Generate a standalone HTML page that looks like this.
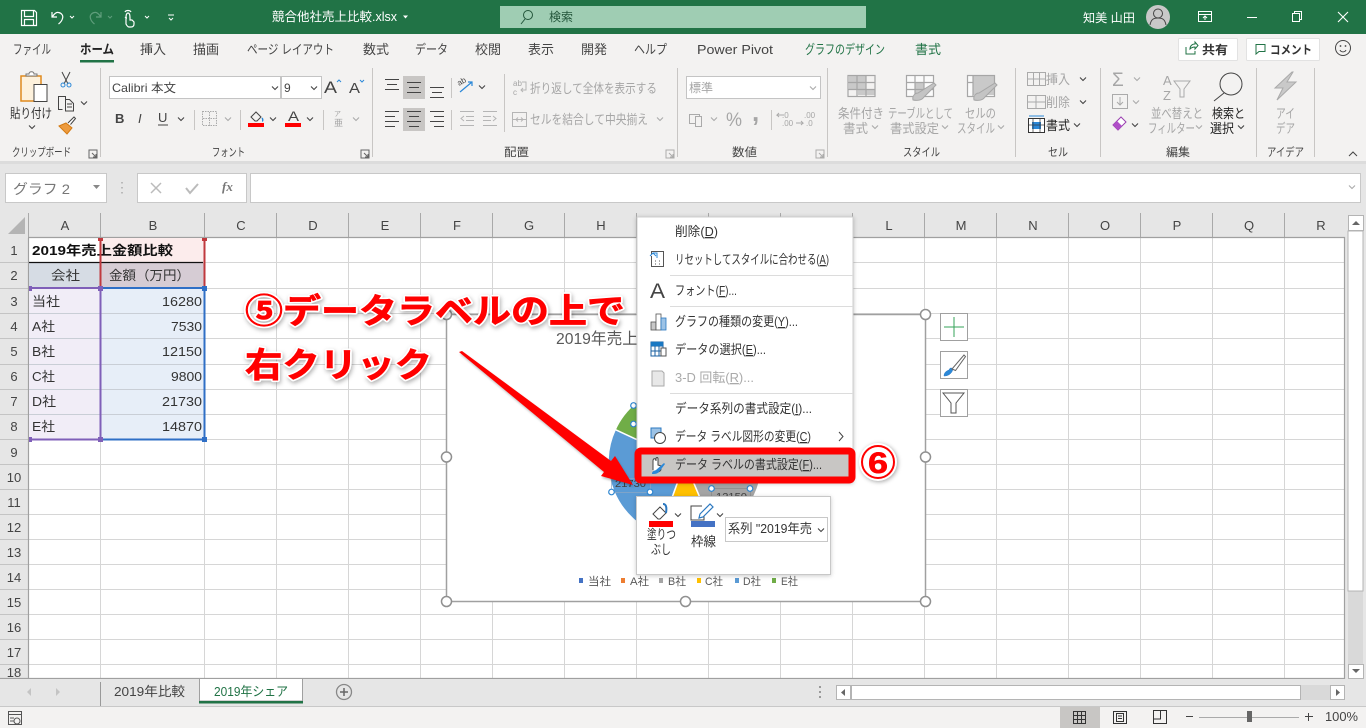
<!DOCTYPE html>
<html lang="ja"><head><meta charset="utf-8"><title>競合他社売上比較.xlsx</title>
<style>
html,body{margin:0;padding:0;background:#fff;width:1366px;height:728px;overflow:hidden}
svg{display:block}
text{font-family:"Liberation Sans","Noto Sans CJK JP",sans-serif;font-size:12px;fill:#444}
.w{fill:#fff}.g{fill:#a6a6a6}.d{fill:#444}.k{fill:#222}.gr{fill:#217346}
.t{font-size:13px}
.l{font-size:11.500px;fill:#444}
.h{font-size:13px;fill:#444;text-anchor:middle}
.c{font-size:13px;fill:#333}
.m{font-size:13px;fill:#333}
.big{font-size:34px;font-weight:bold;fill:#f00;stroke:#fff;stroke-width:4px;paint-order:stroke;stroke-linejoin:round;filter:drop-shadow(1px 2px 2px rgba(0,0,0,.3))}
.big2{font-size:34px;font-weight:bold;fill:#f00;stroke:#f00;stroke-width:.7px}
.u{text-decoration:underline}
</style></head><body>
<svg width="1366" height="728" viewBox="0 0 1366 728" xmlns="http://www.w3.org/2000/svg">
<defs>
<path id="ch" d="M-3-1.500 0 1.500 3-1.500" fill="none" stroke="#444" stroke-width="1.100"/>
<path id="cg" d="M-3-1.500 0 1.500 3-1.500" fill="none" stroke="#aaa" stroke-width="1.100"/>
<path id="lc" d="M0 0h8v8h-8zM3 3l4 4M7 4v3h-3" fill="none" stroke="#666" stroke-width="1"/>
</defs>
<rect width="1366" height="728" fill="#e6e6e6"/>

<!-- title bar -->
<rect width="1366" height="34" fill="#217346"/>
<g fill="none" stroke="#fff" stroke-width="1.200">
<path d="M21.500 10.500h13l2 2v13h-15zM24.500 10.500v6h9v-6M24.500 25.500v-6h9v6"/>
<path d="M52 12v5h5M52.500 16.500c2-3 4-4.500 6-4 3 .5 5 3 4 6-.5 2-2 4-4 5.500"/>
<path d="M70 16l2 2 2-2" stroke-width="1"/>
<path d="M101 12v5h-5M100.500 16.500c-2-3-4-4.500-6-4-3 .5-5 3-4 6 .5 2 2 4 4 5.500" stroke="#5f9e7c"/>
<path d="M108 16l2 2 2-2" stroke="#5f9e7c" stroke-width="1"/>
<path d="M126 24v-6c0-1 0-5 2-5s2 4 2 5v2h2l2 2v2c0 2-1 3-3 3h-2c-1 0-2-1-3-3zM125 12c1-2 5-2 6 0M125 17c1 1 2 1 2 1"/>
<path d="M145 16l2 2 2-2M168 15h6M169 18l2 2 2-2" stroke-width="1"/>
</g>
<text x="272" y="21" class="w" style="font-size:12.500px" textLength="125" lengthAdjust="spacingAndGlyphs">競合他社売上比較.xlsx</text>
<path d="M403 15.500h5l-2.500 3z" fill="#fff"/>
<rect x="500" y="6" width="366" height="22" fill="#9fcdb3"/>
<circle cx="528" cy="15" r="4.500" fill="none" stroke="#24563b" stroke-width="1"/><path d="M525 19l-4 5" stroke="#24563b" stroke-width="1"/>
<text x="549" y="21" style="fill:#24563b" textLength="24" lengthAdjust="spacingAndGlyphs">検索</text>
<text x="1083" y="22" class="w" textLength="52" lengthAdjust="spacingAndGlyphs">知美 山田</text>
<circle cx="1158" cy="17" r="12" fill="#c8c8c8"/>
<circle cx="1158" cy="13.500" r="4.500" fill="none" stroke="#444" stroke-width="1"/><path d="M1150 25c1-6 4-7 8-7s7 1 8 7" fill="none" stroke="#444" stroke-width="1"/>
<g fill="none" stroke="#fff" stroke-width="1">
<path d="M1198.500 11.500h13v10h-13zM1198.500 14.500h13M1205 20v-4M1203 18l2-2 2 2"/>
<path d="M1247 17.500h10"/>
<path d="M1292.500 13.500h7v8h-7zM1294.500 13.500v-2h7v8h-2"/>
<path d="M1338 12l10 10M1348 12l-10 10" stroke-width="1.100"/>
</g>

<!-- ribbon background -->
<rect y="34" width="1366" height="127" fill="#f3f2f1"/>
<rect y="161" width="1366" height="3" fill="#dcdcdc"/>
<!-- tabs -->
<text x="13" y="54" class="t" textLength="38" lengthAdjust="spacingAndGlyphs">ファイル</text>
<text x="80" y="54" font-weight="bold" class="k t" textLength="34" lengthAdjust="spacingAndGlyphs">ホーム</text>
<rect x="80" y="60" width="34" height="2.500" fill="#217346"/>
<text x="140" y="54" class="t" textLength="26" lengthAdjust="spacingAndGlyphs">挿入</text>
<text x="193" y="54" class="t" textLength="26" lengthAdjust="spacingAndGlyphs">描画</text>
<text x="247" y="54" class="t" textLength="87" lengthAdjust="spacingAndGlyphs">ページ レイアウト</text>
<text x="363" y="54" class="t" textLength="26" lengthAdjust="spacingAndGlyphs">数式</text>
<text x="415" y="54" class="t" textLength="33" lengthAdjust="spacingAndGlyphs">データ</text>
<text x="475" y="54" class="t" textLength="26" lengthAdjust="spacingAndGlyphs">校閲</text>
<text x="528" y="54" class="t" textLength="26" lengthAdjust="spacingAndGlyphs">表示</text>
<text x="581" y="54" class="t" textLength="26" lengthAdjust="spacingAndGlyphs">開発</text>
<text x="634" y="54" class="t" textLength="33" lengthAdjust="spacingAndGlyphs">ヘルプ</text>
<text x="697" y="54" class="t" textLength="76" lengthAdjust="spacingAndGlyphs">Power Pivot</text>
<text x="805" y="54" class="gr t" textLength="80" lengthAdjust="spacingAndGlyphs">グラフのデザイン</text>
<text x="915" y="54" class="gr t" textLength="26" lengthAdjust="spacingAndGlyphs">書式</text>
<rect x="1178.500" y="38.500" width="59" height="22" rx="1" fill="#fff" stroke="#e2e2e2"/>
<path d="M1186 47v7h9v-3M1190 49c0-3 2-5 5-5v-2l3 3.500-3 3.500v-2c-2 0-4 1-5 2z" fill="none" stroke="#217346" stroke-width="1"/>
<text x="1202" y="54" font-weight="bold" textLength="26" lengthAdjust="spacingAndGlyphs" style="fill:#333">共有</text>
<rect x="1246.500" y="38.500" width="73" height="22" rx="1" fill="#fff" stroke="#e2e2e2"/>
<path d="M1256 44.500h9v7h-6l-3 2.500z" fill="none" stroke="#217346" stroke-width="1"/>
<text x="1270" y="54" font-weight="bold" textLength="42" lengthAdjust="spacingAndGlyphs" style="fill:#333">コメント</text>
<circle cx="1343" cy="48" r="7.500" fill="none" stroke="#444" stroke-width="1"/><path d="M1340 50c1 2.500 5 2.500 6 0" fill="none" stroke="#444"/><circle cx="1340.500" cy="46" r=".9" fill="#444"/><circle cx="1345.500" cy="46" r=".9" fill="#444"/>

<!-- ribbon separators -->
<g stroke="#c8c6c4" stroke-width="1">
<path d="M100.500 68v89M372.500 68v89M677.500 68v89M827.500 68v89M1015.500 68v89M1100.500 68v89M1256.500 68v89M1314.500 68v89"/>
<path d="M194.500 110v20M240.500 110v20M323.500 110v20M451.500 78v20M451.500 110v20M504.500 74v58M771.500 110v20"/>
</g>

<!-- clipboard -->
<rect x="21" y="76" width="20" height="25" fill="#fdf1dc" stroke="#e08a1e" stroke-width="1.500"/>
<path d="M26 76v-2h3c0-3 5-3 5 0h3v2z" fill="#fff" stroke="#777"/>
<rect x="34" y="84.500" width="13" height="17" fill="#fff" stroke="#444"/>
<text x="10" y="118" class="m" textLength="42" lengthAdjust="spacingAndGlyphs">貼り付け</text>
<use href="#ch" x="32" y="127"/>
<path d="M62 72l6 12M70 72l-6 12" stroke="#444" fill="none"/><circle cx="63" cy="85" r="2" fill="none" stroke="#2b88d8"/><circle cx="69" cy="85" r="2" fill="none" stroke="#2b88d8"/>
<path d="M62.500 109.500h-4v-13h7v3M65.500 99.500h4l4 4v7.500h-8zM67 104h5M67 107h5" fill="none" stroke="#444"/>
<use href="#ch" x="84" y="103"/>
<path d="M59 126l7-3 6 5-5 6z" fill="#ed9b3e" stroke="#d47a12"/><path d="M68 123l6-6 1.500 1.500-5 6" fill="#fff" stroke="#444"/>
<text x="12" y="156" class="l" textLength="59" lengthAdjust="spacingAndGlyphs">クリップボード</text>
<use href="#lc" x="89" y="150"/>

<!-- font -->
<rect x="109.500" y="76.500" width="171" height="22" fill="#fff" stroke="#c4c4c4"/>
<rect x="281.500" y="76.500" width="40" height="22" fill="#fff" stroke="#c4c4c4"/>
<text x="112" y="92" textLength="64" lengthAdjust="spacingAndGlyphs">Calibri 本文</text>
<use href="#ch" x="275" y="88"/>
<text x="284" y="92">9</text>
<use href="#ch" x="314" y="88"/>
<text x="324" y="93" style="font-size:17px" textLength="13" lengthAdjust="spacingAndGlyphs">A</text>
<path d="M337 82l2-2 2 2" fill="none" stroke="#2b88d8"/>
<text x="349" y="93" style="font-size:15px" textLength="11" lengthAdjust="spacingAndGlyphs">A</text>
<path d="M360 80l2 2 2-2" fill="none" stroke="#2b88d8"/>
<text x="115" y="123" font-weight="bold" style="font-size:13px">B</text>
<text x="138" y="123" font-style="italic" style="font-size:13px">I</text>
<text x="158" y="122" style="font-size:13px">U</text><path d="M158 125h10" stroke="#444"/>
<use href="#ch" x="181" y="119"/>
<rect x="202.500" y="111.500" width="14" height="14" fill="none" stroke="#aaa" stroke-dasharray="1.500 1"/><path d="M209.500 112v14M203 118.500h14" stroke="#aaa" stroke-dasharray="1.500 1"/>
<use href="#cg" x="228" y="119"/>
<path d="M251 117l5-5 5 5-4 4h-2z" fill="none" stroke="#444"/><path d="M262 118c1 1 1 3 0 3" stroke="#2b88d8" stroke-width="1.500" fill="none"/>
<rect x="248" y="123" width="16" height="4" fill="#f00"/>
<use href="#ch" x="273" y="119"/>
<text x="288" y="121" style="font-size:14px" textLength="11" lengthAdjust="spacingAndGlyphs">A</text>
<rect x="285" y="123" width="16" height="4" fill="#f00"/>
<use href="#ch" x="310" y="119"/>
<text x="334" y="116" class="g" style="font-size:7px">ア</text><text x="334" y="126" class="g" style="font-size:9px">亜</text>
<use href="#cg" x="356" y="119"/>
<text x="212" y="156" class="l" textLength="33" lengthAdjust="spacingAndGlyphs">フォント</text>
<use href="#lc" x="361" y="150"/>

<!-- alignment -->
<rect x="403" y="76" width="22" height="23" fill="#c8c6c4"/>
<rect x="403" y="108" width="22" height="23" fill="#c8c6c4"/>
<g stroke="#444" stroke-width="1" fill="none">
<path d="M385 79.500h14M387 84.500h10M385 89.500h14"/>
<path d="M407 82.500h14M409 87.500h10M407 92.500h14"/>
<path d="M430 87.500h14M432 92.500h10M430 97.500h14"/>
<path d="M385 111.500h14M385 116.500h10M385 121.500h14M385 126.500h10"/>
<path d="M407 111.500h14M409 116.500h10M407 121.500h14M409 126.500h10"/>
<path d="M430 111.500h14M434 116.500h10M430 121.500h14M434 126.500h10"/>
</g>
<path d="M460 92l12-10M468 82h4v4" fill="none" stroke="#2b88d8" stroke-width="1.200"/>
<text x="459" y="86" style="font-size:8px" transform="rotate(-30 459 86)">ab</text>
<use href="#ch" x="482" y="87"/>
<g stroke="#b5b5b5" fill="none">
<path d="M460 111.500h14M466 116.500h8M466 120.500h8M460 125.500h14M464 116l-3 2.500 3 2.500"/>
<path d="M483 111.500h14M483 116.500h8M483 120.500h8M483 125.500h14M493 116l3 2.500-3 2.500"/>
<rect x="512.500" y="112.500" width="14" height="14"/><path d="M512.500 119.500h14M516 119.500l2-2M516 119.500l2 2M523 119.500l-2-2M523 119.500l-2 2"/>
</g>
<text x="513" y="86" class="g" style="font-size:8px">ab</text><text x="513" y="95" class="g" style="font-size:8px">c</text>
<path d="M522 82h4v8h-5M523 88l-2 2 2 2" fill="none" stroke="#b5b5b5"/>
<text x="530" y="93" class="g" style="font-size:13px" textLength="127" lengthAdjust="spacingAndGlyphs">折り返して全体を表示する</text>
<text x="530" y="124" class="g" style="font-size:13px" textLength="118" lengthAdjust="spacingAndGlyphs">セルを結合して中央揃え</text>
<use href="#cg" x="660" y="119"/>
<text x="504" y="156" class="l" textLength="25" lengthAdjust="spacingAndGlyphs">配置</text>
<use href="#lc" x="666" y="150" opacity=".5"/>

<!-- number -->
<rect x="686.500" y="76.500" width="134" height="22" fill="#fff" stroke="#c4c4c4"/>
<text x="689" y="92" class="g" textLength="24" lengthAdjust="spacingAndGlyphs">標準</text>
<use href="#cg" x="813" y="88"/>
<rect x="689.500" y="114.500" width="10" height="9" fill="none" stroke="#aaa"/><rect x="695.500" y="116.500" width="6" height="10" fill="#f3f2f1" stroke="#aaa"/>
<use href="#cg" x="714" y="119"/>
<text x="726" y="126" class="g" style="font-size:19px" textLength="16" lengthAdjust="spacingAndGlyphs">%</text>
<text x="752" y="121" class="g" style="font-size:26px;font-weight:bold">,</text>
<text x="782" y="118" class="g" style="font-size:8px">.0</text><text x="782" y="126" class="g" style="font-size:8px">.00</text><path d="M784 115h-7l2-2M777 115l2 2" fill="none" stroke="#aaa"/>
<text x="804" y="118" class="g" style="font-size:8px">.00</text><text x="806" y="126" class="g" style="font-size:8px">.0</text><path d="M796 123h7l-2-2M803 123l-2 2" fill="none" stroke="#aaa"/>
<text x="732" y="156" class="l" textLength="25" lengthAdjust="spacingAndGlyphs">数値</text>
<use href="#lc" x="816" y="150" opacity=".5"/>

<!-- styles -->
<path d="M849 76h17v6h-8v7h-9zM858 82h8v7h9v6h-17z" fill="#c9c9c9"/>
<rect x="906.500" y="75.500" width="27" height="21" fill="#fbfbfb"/>
<rect x="915" y="82" width="9" height="14" fill="#c9c9c9"/>
<rect x="967.500" y="75.500" width="27" height="21" fill="#fbfbfb"/>
<rect x="973" y="76" width="21" height="19" fill="#c9c9c9"/>
<g fill="none" stroke="#a6a6a6" stroke-width="1.200">
<rect x="848" y="75.500" width="27" height="21"/><path d="M848 82.500h27M848 89.500h27M857 75v21M866 75v21"/>
<rect x="906.500" y="75.500" width="27" height="21"/><path d="M906 82.500h27M906 89.500h27M915 75v21M924 75v21"/>
<rect x="967.500" y="75.500" width="27" height="21"/><path d="M967 82.500h6M973 75v21"/>
</g>
<path d="M913 100c-1-4 2-7 5-7l16-10 2 2-12 12c-2 3-6 4-11 3zM974 100c-1-4 2-7 5-7l16-10 2 2-12 12c-2 3-6 4-11 3z" fill="#c4c4c4" stroke="#a6a6a6"/>
<text x="838" y="118" class="g" style="font-size:13px" textLength="46" lengthAdjust="spacingAndGlyphs">条件付き</text>
<text x="843" y="133" class="g" style="font-size:13px" textLength="25" lengthAdjust="spacingAndGlyphs">書式</text><use href="#cg" x="875" y="127"/>
<text x="888" y="118" class="g" style="font-size:13px" textLength="65" lengthAdjust="spacingAndGlyphs">テーブルとして</text>
<text x="890" y="133" class="g" style="font-size:13px" textLength="49" lengthAdjust="spacingAndGlyphs">書式設定</text><use href="#cg" x="945" y="127"/>
<text x="965" y="118" class="g" style="font-size:13px" textLength="31" lengthAdjust="spacingAndGlyphs">セルの</text>
<text x="957" y="133" class="g" style="font-size:13px" textLength="38" lengthAdjust="spacingAndGlyphs">スタイル</text><use href="#cg" x="1001" y="127"/>
<text x="903" y="156" class="l" textLength="37" lengthAdjust="spacingAndGlyphs">スタイル</text>

<!-- cells -->
<g fill="none" stroke="#aaa">
<rect x="1027.500" y="72.500" width="18" height="13"/><path d="M1033.500 72v14M1039.500 72v14M1027 79h18"/>
<rect x="1027.500" y="95.500" width="18" height="13"/><path d="M1027 102h18M1036 95v14"/>
</g>
<text x="1046" y="84" class="g" style="font-size:13px" textLength="24" lengthAdjust="spacingAndGlyphs">挿入</text>
<text x="1046" y="107" class="g" style="font-size:13px" textLength="24" lengthAdjust="spacingAndGlyphs">削除</text>
<rect x="1028.500" y="118.500" width="16" height="14" fill="#fff" stroke="#333"/><rect x="1032" y="122" width="9" height="7" fill="#2b88d8"/><path d="M1033 118v14M1040 118v14M1028 125h16" stroke="#333" fill="none" opacity=".7"/>
<path d="M1029 116h15" stroke="#2b88d8"/>
<text x="1046" y="130" class="k" style="font-size:13px" textLength="24" lengthAdjust="spacingAndGlyphs">書式</text>
<use href="#ch" x="1083" y="79"/><use href="#ch" x="1083" y="102"/><use href="#ch" x="1077" y="125"/>
<text x="1048" y="156" class="l" textLength="20" lengthAdjust="spacingAndGlyphs">セル</text>

<!-- editing -->
<text x="1112" y="86" class="g" style="font-size:19px">Σ</text><use href="#cg" x="1137" y="79"/>
<rect x="1112.500" y="94.500" width="15" height="14" fill="none" stroke="#aaa"/><path d="M1120 97v8M1117 102l3 3 3-3" fill="none" stroke="#aaa"/>
<use href="#cg" x="1136" y="102"/>
<path d="M1113 125l8-8 5 5-8 8z" fill="#fff" stroke="#9a3fb0"/><path d="M1113 125l4-4 5 5-4 4z" fill="#b04fc8"/>
<use href="#ch" x="1135" y="125"/>
<text x="1163" y="85" class="g" style="font-size:13px">A</text><text x="1163" y="100" class="g" style="font-size:13px">Z</text>
<path d="M1174 81h16l-6 8v8h-4v-8z" fill="none" stroke="#aaa"/>
<text x="1151" y="118" class="g" style="font-size:13px" textLength="52" lengthAdjust="spacingAndGlyphs">並べ替えと</text>
<text x="1148" y="133" class="g" style="font-size:13px" textLength="47" lengthAdjust="spacingAndGlyphs">フィルター</text><use href="#cg" x="1199" y="127"/>
<circle cx="1231" cy="84" r="11" fill="none" stroke="#444"/><path d="M1224 93l-10 8" stroke="#444" fill="none"/>
<text x="1212" y="118" class="k" style="font-size:13px" textLength="33" lengthAdjust="spacingAndGlyphs">検索と</text>
<text x="1210" y="133" class="k" style="font-size:13px" textLength="24" lengthAdjust="spacingAndGlyphs">選択</text><use href="#ch" x="1241" y="127"/>
<text x="1166" y="156" class="l" textLength="24" lengthAdjust="spacingAndGlyphs">編集</text>
<!-- ideas -->
<path d="M1292 72l-17 16h8l-6 12 19-18h-9l6-10z" fill="#c9c9c9" stroke="#aaa"/>
<text x="1276" y="118" class="g" style="font-size:13px" textLength="19" lengthAdjust="spacingAndGlyphs">アイ</text>
<text x="1276" y="133" class="g" style="font-size:13px" textLength="19" lengthAdjust="spacingAndGlyphs">デア</text>
<text x="1267" y="156" class="l" textLength="37" lengthAdjust="spacingAndGlyphs">アイデア</text>
<path d="M1349 156l4-4 4 4" fill="none" stroke="#444"/>

<!-- formula bar -->
<rect x="5.500" y="173.500" width="101" height="29" fill="#fff" stroke="#c8c8c8"/>
<text x="13" y="194" textLength="57" lengthAdjust="spacingAndGlyphs" style="font-size:14px;fill:#777">グラフ 2</text>
<path d="M93 185h7l-3.500 4z" fill="#888"/>
<path d="M122 182v1.500M122 187v1.500M122 192v1.500" stroke="#aaa" stroke-width="1.500"/>
<rect x="137.500" y="173.500" width="109" height="29" fill="#fff" stroke="#c8c8c8"/>
<path d="M151 183l10 10M161 183l-10 10" stroke="#bbb" stroke-width="1.500"/>
<path d="M186 188l4 5 8-9" stroke="#bbb" stroke-width="2" fill="none"/>
<text x="222" y="191" style="font-family:'Liberation Serif',serif;font-style:italic;font-weight:bold;font-size:13px;fill:#777">fx</text>
<rect x="250.500" y="173.500" width="1110" height="29" fill="#fff" stroke="#c8c8c8"/>
<use href="#cg" x="1352" y="187"/>

<!-- sheet -->
<rect x="29" y="238" width="1315" height="440" fill="#fff"/>
<path d="M8 234L25 217V234Z" fill="#b4b4b4"/>
<g stroke="#a9a9a9"><path d="M28.500 213v25M100.500 213v25M204.500 213v25M276.500 213v25M348.500 213v25M420.500 213v25M492.500 213v25M564.500 213v25M636.500 213v25M708.500 213v25M780.500 213v25M852.500 213v25M924.500 213v25M996.500 213v25M1068.500 213v25M1140.500 213v25M1212.500 213v25M1284.500 213v25"/></g>
<path d="M0 262.500h28M0 288.500h28M0 313.500h28M0 338.500h28M0 364.500h28M0 389.500h28M0 414.500h28M0 439.500h28M0 464.500h28M0 489.500h28M0 514.500h28M0 539.500h28M0 564.500h28M0 589.500h28M0 614.500h28M0 639.500h28M0 664.500h28" stroke="#c4c4c4"/>
<g stroke="#d6d6d6">
<path d="M29 262.500H1344M29 288.500H1344M29 313.500H1344M29 338.500H1344M29 364.500H1344M29 389.500H1344M29 414.500H1344M29 439.500H1344M29 464.500H1344M29 489.500H1344M29 514.500H1344M29 539.500H1344M29 564.500H1344M29 589.500H1344M29 614.500H1344M29 639.500H1344M29 664.500H1344"/>
<path d="M100.500 238v440M204.500 238v440M276.500 238v440M348.500 238v440M420.500 238v440M492.500 238v440M564.500 238v440M636.500 238v440M708.500 238v440M780.500 238v440M852.500 238v440M924.500 238v440M996.500 238v440M1068.500 238v440M1140.500 238v440M1212.500 238v440M1284.500 238v440"/>
</g>
<path d="M28.500 238v440M28 237.500H1344.500V678.500H0" fill="none" stroke="#a0a0a0" stroke-width="1.200"/>
<g>
<text x="65" y="230" class="h">A</text><text x="153" y="230" class="h">B</text><text x="241" y="230" class="h">C</text><text x="313" y="230" class="h">D</text><text x="385" y="230" class="h">E</text><text x="457" y="230" class="h">F</text><text x="529" y="230" class="h">G</text><text x="601" y="230" class="h">H</text><text x="889" y="230" class="h">L</text><text x="961" y="230" class="h">M</text><text x="1033" y="230" class="h">N</text><text x="1105" y="230" class="h">O</text><text x="1177" y="230" class="h">P</text><text x="1249" y="230" class="h">Q</text><text x="1321" y="230" class="h">R</text>
<text x="14" y="255" class="h">1</text><text x="14" y="280" class="h">2</text><text x="14" y="306" class="h">3</text><text x="14" y="331" class="h">4</text><text x="14" y="356" class="h">5</text><text x="14" y="381" class="h">6</text><text x="14" y="406" class="h">7</text><text x="14" y="431" class="h">8</text><text x="14" y="457" class="h">9</text><text x="14" y="482" class="h">10</text><text x="14" y="507" class="h">11</text><text x="14" y="532" class="h">12</text><text x="14" y="557" class="h">13</text><text x="14" y="582" class="h">14</text><text x="14" y="607" class="h">15</text><text x="14" y="632" class="h">16</text><text x="14" y="657" class="h">17</text><text x="14" y="677" class="h">18</text>
</g>
<!-- cell fills -->
<rect x="101" y="238" width="103" height="24" fill="#fcecec"/>
<rect x="29" y="263" width="71" height="25" fill="#d6dce4"/>
<rect x="101" y="263" width="103" height="25" fill="#d6ccd4"/>
<rect x="29" y="288" width="71" height="151" fill="#f1edf7"/>
<rect x="101" y="288" width="103" height="151" fill="#e7eef8"/>
<path d="M29 313.500h175M29 338.500h175M29 364.500h175M29 389.500h175M29 414.500h175" stroke="#c9ced6"/>
<path d="M29 262.500h174" stroke="#111" stroke-width="1.200"/>
<text x="32" y="255" font-weight="bold" style="font-size:13px;fill:#111" textLength="141" lengthAdjust="spacingAndGlyphs">2019年売上金額比較</text>
<text x="51" y="280" class="c" textLength="29" lengthAdjust="spacingAndGlyphs">会社</text>
<text x="109" y="280" class="c" textLength="81" lengthAdjust="spacingAndGlyphs">金額（万円）</text>
<text x="32" y="306" class="c" textLength="28" lengthAdjust="spacingAndGlyphs">当社</text>
<text x="32" y="331" class="c" textLength="23" lengthAdjust="spacingAndGlyphs">A社</text>
<text x="32" y="356" class="c" textLength="23" lengthAdjust="spacingAndGlyphs">B社</text>
<text x="32" y="381" class="c" textLength="23" lengthAdjust="spacingAndGlyphs">C社</text>
<text x="32" y="406" class="c" textLength="24" lengthAdjust="spacingAndGlyphs">D社</text>
<text x="32" y="431" class="c" textLength="23" lengthAdjust="spacingAndGlyphs">E社</text>
<g text-anchor="end">
<text x="202" y="306" class="c" textLength="40" lengthAdjust="spacingAndGlyphs">16280</text>
<text x="202" y="331" class="c" textLength="31" lengthAdjust="spacingAndGlyphs">7530</text>
<text x="202" y="356" class="c" textLength="40" lengthAdjust="spacingAndGlyphs">12150</text>
<text x="202" y="381" class="c" textLength="31" lengthAdjust="spacingAndGlyphs">9800</text>
<text x="202" y="406" class="c" textLength="40" lengthAdjust="spacingAndGlyphs">21730</text>
<text x="202" y="431" class="c" textLength="40" lengthAdjust="spacingAndGlyphs">14870</text>
</g>
<!-- range highlights -->
<path d="M100.500 238v50M204.500 238v50" stroke="#c0393e" stroke-width="2"/>
<rect x="98" y="238" width="5" height="3" fill="#c0393e"/><rect x="202" y="238" width="5" height="3" fill="#c0393e"/>
<path d="M29 288h72M29 439.500h72M100.500 288v151" stroke="#7f5fb8" stroke-width="2" fill="none"/>
<path d="M101 288h104M101 439.500h104M204.500 288v151" stroke="#2f6fc6" stroke-width="2" fill="none"/>
<rect x="29" y="286" width="3" height="5" fill="#7f5fb8"/><rect x="29" y="437" width="3" height="5" fill="#7f5fb8"/>
<rect x="98" y="286" width="5" height="5" fill="#7f5fb8"/><rect x="98" y="437" width="5" height="5" fill="#7f5fb8"/>
<rect x="202" y="286" width="5" height="5" fill="#2f6fc6"/><rect x="202" y="437" width="5" height="5" fill="#2f6fc6"/>

<!-- chart -->
<rect x="446.500" y="314.500" width="479" height="287" fill="#fff" stroke="#a0a0a0" stroke-width="1.500"/>
<text x="556" y="344" textLength="82" lengthAdjust="spacingAndGlyphs" style="font-size:16px;fill:#595959">2019年売上</text>
<g stroke="#fff" stroke-width="1.500">
<path d="M685 462L658.700 534.400A77 77 0 0 1 615.200 429.500Z" fill="#5b9bd5"/>
<path d="M685 462L615.200 429.500A77 77 0 0 1 685 385Z" fill="#70ad47"/>
<path d="M685 462L714.800 533A77 77 0 0 1 658.700 534.400Z" fill="#ffc000"/>
<path d="M685 462L759.700 480.800A77 77 0 0 1 714.800 533Z" fill="#a5a5a5"/>
</g>
<text x="615" y="487" style="font-size:10px;fill:#404040" textLength="31" lengthAdjust="spacingAndGlyphs">21730</text>
<text x="716" y="500" style="font-size:10px;fill:#404040" textLength="31" lengthAdjust="spacingAndGlyphs">12150</text>
<rect x="611.500" y="478.500" width="39" height="14" fill="none" stroke="#8fa9c4" stroke-width=".7"/>
<rect x="711.500" y="488.500" width="39" height="14" fill="none" stroke="#8a8a8a" stroke-width=".7"/>
<g fill="#fff" stroke="#2f86d0" stroke-width="1.200">
<circle cx="611.500" cy="492" r="2.800"/><circle cx="650" cy="492" r="2.800"/><circle cx="711.500" cy="488.500" r="2.800"/><circle cx="750" cy="488.500" r="2.800"/><circle cx="633.500" cy="405.500" r="2.800"/><circle cx="633.500" cy="424" r="2.800"/>
</g>
<g>
<rect x="579" y="578" width="4" height="5" fill="#4472c4"/><text x="588" y="585" style="font-size:11px;fill:#595959" textLength="23" lengthAdjust="spacingAndGlyphs">当社</text>
<rect x="621" y="578" width="4" height="5" fill="#ed7d31"/><text x="630" y="585" style="font-size:11px;fill:#595959" textLength="19" lengthAdjust="spacingAndGlyphs">A社</text>
<rect x="659" y="578" width="4" height="5" fill="#a5a5a5"/><text x="668" y="585" style="font-size:11px;fill:#595959" textLength="18" lengthAdjust="spacingAndGlyphs">B社</text>
<rect x="697" y="578" width="4" height="5" fill="#ffc000"/><text x="705" y="585" style="font-size:11px;fill:#595959" textLength="18" lengthAdjust="spacingAndGlyphs">C社</text>
<rect x="735" y="578" width="4" height="5" fill="#5b9bd5"/><text x="743" y="585" style="font-size:11px;fill:#595959" textLength="18" lengthAdjust="spacingAndGlyphs">D社</text>
<rect x="772" y="578" width="4" height="5" fill="#70ad47"/><text x="781" y="585" style="font-size:11px;fill:#595959" textLength="17" lengthAdjust="spacingAndGlyphs">E社</text>
</g>
<g fill="#fff" stroke="#909090" stroke-width="1.500">
<circle cx="446.500" cy="314.500" r="5"/><circle cx="925.500" cy="314.500" r="5"/><circle cx="446.500" cy="457" r="5"/><circle cx="925.500" cy="457" r="5"/><circle cx="446.500" cy="601.500" r="5"/><circle cx="685.500" cy="601.500" r="5"/><circle cx="925.500" cy="601.500" r="5"/>
</g>
<!-- chart buttons -->
<g fill="#fff" stroke="#a0a0a0">
<rect x="940.500" y="313.500" width="27" height="27"/><rect x="940.500" y="351.500" width="27" height="27"/><rect x="940.500" y="389.500" width="27" height="27"/>
</g>
<path d="M954 317v20M944 327h20" stroke="#35a35a" stroke-width="1"/>
<path d="M944 376c0-3 2-5 5-6 1-3 3-2 4-1-1 4-4 7-9 7z" fill="#2b88d8" stroke="#2b78c0" stroke-width=".5"/>
<path d="M952 369l12-14 1.500 1.500-10 14z" fill="#fff" stroke="#666"/>
<path d="M943 393h21l-8 10v10h-5v-10z" fill="#fff" stroke="#555"/>

<!-- big annotation text -->
<text x="245" y="323" class="big" textLength="380" lengthAdjust="spacingAndGlyphs">⑤データラベルの上で</text>
<text x="245" y="323" class="big2" textLength="380" lengthAdjust="spacingAndGlyphs" aria-hidden="true">⑤データラベルの上で</text>
<text x="245" y="377" class="big" textLength="187" lengthAdjust="spacingAndGlyphs">右クリック</text>
<text x="245" y="377" class="big2" textLength="187" lengthAdjust="spacingAndGlyphs" aria-hidden="true">右クリック</text>

<!-- context menu -->
<rect x="637" y="217" width="216" height="265" fill="#fff" stroke="#cfcfcf" style="filter:drop-shadow(0 1px 2px rgba(0,0,0,.25))"/>
<path d="M670 275.500h183M670 306.500h183M670 393.500h183" stroke="#dcdcdc"/>
<text x="675" y="236" class="m" textLength="43" lengthAdjust="spacingAndGlyphs">削除(<tspan class="u">D</tspan>)</text>
<text x="675" y="264" class="m" textLength="154" lengthAdjust="spacingAndGlyphs">リセットしてスタイルに合わせる(<tspan class="u">A</tspan>)</text>
<text x="675" y="295" class="m" textLength="62" lengthAdjust="spacingAndGlyphs">フォント(<tspan class="u">F</tspan>)...</text>
<text x="675" y="326" class="m" textLength="123" lengthAdjust="spacingAndGlyphs">グラフの種類の変更(<tspan class="u">Y</tspan>)...</text>
<text x="675" y="354" class="m" textLength="91" lengthAdjust="spacingAndGlyphs">データの選択(<tspan class="u">E</tspan>)...</text>
<text x="675" y="382" class="m" textLength="79" lengthAdjust="spacingAndGlyphs" style="fill:#aaa">3-D 回転(<tspan class="u">R</tspan>)...</text>
<text x="675" y="413" class="m" textLength="137" lengthAdjust="spacingAndGlyphs">データ系列の書式設定(<tspan class="u">I</tspan>)...</text>
<text x="675" y="441" class="m" textLength="136" lengthAdjust="spacingAndGlyphs">データ ラベル図形の変更(<tspan class="u">C</tspan>)</text>
<path d="M839 432l4 4.500-4 4.500" fill="none" stroke="#444"/>
<!-- menu icons -->
<rect x="651.500" y="251.500" width="12" height="15" fill="#fff" stroke="#555"/><path d="M650 256l3-3 3 3M653 253h4v5" fill="#fff" stroke="#2b88d8"/><path d="M655 261h1M659 261h1M655 264h1M659 264h1" stroke="#555"/>
<text x="650" y="298" style="font-size:21px;fill:#444" textLength="15" lengthAdjust="spacingAndGlyphs">A</text>
<rect x="651" y="322" width="5" height="8" fill="#c8c8c8" stroke="#555" stroke-width=".8"/><rect x="656" y="314" width="5" height="16" fill="#fff" stroke="#555" stroke-width=".8"/><rect x="661" y="318" width="5" height="12" fill="#9dc3e6" stroke="#2b78c0" stroke-width=".8"/>
<rect x="651" y="342" width="12" height="14" fill="#fff" stroke="#1a5fa0"/><path d="M651 346h12M651 351h12M655 342v14M659 342v14" stroke="#1a5fa0"/><rect x="651" y="342" width="12" height="4" fill="#1a78c2"/><rect x="661" y="348" width="5" height="8" fill="#fff" stroke="#555"/>
<path d="M652 371h10l2 2v13h-12z" fill="#e8e8e8" stroke="#aaa"/>
<rect x="651" y="428" width="10" height="10" fill="#9dc3e6" stroke="#2b78c0"/><circle cx="660" cy="438" r="5.500" fill="#fff" stroke="#444"/>

<!-- highlighted item with red box -->
<rect x="638" y="451" width="214" height="29" fill="#c8c6c4" stroke="#f00" stroke-width="7" rx="3"/>
<text x="675" y="469" class="m" textLength="147" lengthAdjust="spacingAndGlyphs">データ ラベルの書式設定(<tspan class="u">F</tspan>)...</text>
<path d="M653 470v-9c0-3 3-3 3 0v-2c0-2 2-2 2 0v6l3 1v3c0 2-2 3-4 3" fill="#fff" stroke="#444"/>
<path d="M652 474c0-3 2-3 4-4l8-7 1 1-6 8c-2 2-4 2-7 2z" fill="#2b88d8"/>
<!-- circled 6 -->
<circle cx="878" cy="462" r="19" fill="#fff" style="filter:drop-shadow(1px 1px 2px rgba(0,0,0,.35))"/>
<circle cx="878" cy="462" r="16" fill="none" stroke="#f00" stroke-width="2"/>
<text x="868" y="473" style="font-size:30px;font-weight:bold;fill:#f00;stroke:#f00;stroke-width:.6px" textLength="20" lengthAdjust="spacingAndGlyphs">6</text>

<!-- arrow -->
<polygon points="459,352 462,351 611,461 615,456 633,485 601,476 604,472" fill="#f00" style="filter:drop-shadow(1px 2px 1px rgba(0,0,0,.25))"/>

<!-- mini toolbar -->
<rect x="636.500" y="496.500" width="194" height="78" fill="#fff" stroke="#c8c8c8" style="filter:drop-shadow(0 1px 2px rgba(0,0,0,.2))"/>
<path d="M653 514l7-7 6 6-6 6h-2z" fill="#fff" stroke="#444"/><path d="M663 504c3 0 4 3 3 9" fill="none" stroke="#2b78c0" stroke-width="2"/>
<use href="#ch" x="678" y="515"/>
<rect x="649" y="521" width="24" height="6" fill="#f00"/>
<text x="647" y="539" class="m" textLength="29" lengthAdjust="spacingAndGlyphs">塗りつ</text>
<text x="651" y="554" class="m" textLength="20" lengthAdjust="spacingAndGlyphs">ぶし</text>
<path d="M702 506h-11v14h13v-5" fill="none" stroke="#444"/><path d="M699 518l1-4 10-10 3 3-10 10z" fill="#fff" stroke="#2b78c0" stroke-width="1.200"/>
<use href="#ch" x="720" y="515"/>
<rect x="691" y="521" width="24" height="6" fill="#4472c4"/>
<text x="691" y="546" class="m" textLength="25" lengthAdjust="spacingAndGlyphs">枠線</text>
<rect x="725.500" y="517.500" width="102" height="24" fill="#fff" stroke="#c8c8c8"/>
<text x="728" y="533" class="m" textLength="84" lengthAdjust="spacingAndGlyphs">系列 "2019年売</text>
<use href="#ch" x="821" y="530"/>

<!-- scrollbars -->
<rect x="1348" y="231" width="15" height="433" fill="#d9d9d9"/>
<rect x="1348" y="231" width="15" height="360" fill="#fff" stroke="#b4b4b4"/>
<rect x="1348.500" y="215.500" width="15" height="15" fill="#fff" stroke="#b4b4b4"/>
<path d="M1352 225h8l-4-4z" fill="#666"/>
<rect x="1348.500" y="664.500" width="15" height="14" fill="#fff" stroke="#b4b4b4"/>
<path d="M1352 669h8l-4 4z" fill="#666"/>

<!-- sheet tabs -->
<rect y="679" width="1366" height="27" fill="#e6e6e6"/>
<path d="M31 688v8l-4-4zM56 688v8l4-4z" fill="#c4c4c4"/>
<path d="M100.500 682v25" stroke="#999"/>
<text x="114" y="696" textLength="71" lengthAdjust="spacingAndGlyphs" style="font-size:13px;fill:#444">2019年比較</text>
<path d="M199.500 679v22h103v-22" fill="#fff" stroke="#a0a0a0"/>
<rect x="199" y="701" width="104" height="2.500" fill="#217346"/>
<text x="214" y="696" class="gr t" textLength="74" lengthAdjust="spacingAndGlyphs">2019年シェア</text>
<circle cx="344" cy="692" r="7.500" fill="none" stroke="#888" stroke-width="1.300"/><path d="M340 692h8M344 688v8" stroke="#666" stroke-width="1.500"/>
<path d="M820 686v2M820 691v2M820 696v2" stroke="#999" stroke-width="2"/>
<rect x="836" y="685" width="508" height="15" fill="#d9d9d9"/>
<rect x="836.500" y="685.500" width="14" height="14" fill="#fff" stroke="#b4b4b4"/><path d="M845 689v7l-4-3.500z" fill="#666"/>
<rect x="851.500" y="685.500" width="449" height="14" fill="#fff" stroke="#b4b4b4"/>
<rect x="1330.500" y="685.500" width="14" height="14" fill="#fff" stroke="#b4b4b4"/><path d="M1336 689v7l4-3.500z" fill="#666"/>

<!-- status bar -->
<rect y="706" width="1366" height="22" fill="#f3f2f1"/>
<path d="M0 706.500h1366" stroke="#c8c8c8"/>
<rect x="8.500" y="711.500" width="13" height="13" fill="#f3f2f1" stroke="#555"/><path d="M8 714.500h13M10 718h4M10 721h4" stroke="#555"/><circle cx="17" cy="721" r="3" fill="#f3f2f1" stroke="#555"/>
<rect x="1060" y="707" width="40" height="21" fill="#c8c6c4"/>
<g fill="none" stroke="#333">
<rect x="1073.500" y="711.500" width="12" height="12"/><path d="M1077.500 711v13M1081.500 711v13M1073 715.500h13M1073 719.500h13"/>
<rect x="1113.500" y="711.500" width="13" height="12"/><rect x="1116.500" y="713.500" width="7" height="8"/><path d="M1118 716h4M1118 718.500h4"/>
<rect x="1153.500" y="710.500" width="13" height="13"/><path d="M1160.500 710v9h-7"/>
</g>
<path d="M1186 716.500h7M1305 716.500h8M1308.500 713v8" stroke="#444" fill="none"/>
<path d="M1199 717.500h100" stroke="#aaa"/>
<rect x="1247" y="711" width="5" height="11" fill="#666"/>
<text x="1325" y="721" textLength="33" lengthAdjust="spacingAndGlyphs" style="font-size:13px;fill:#444">100%</text>
</svg>
</body></html>
